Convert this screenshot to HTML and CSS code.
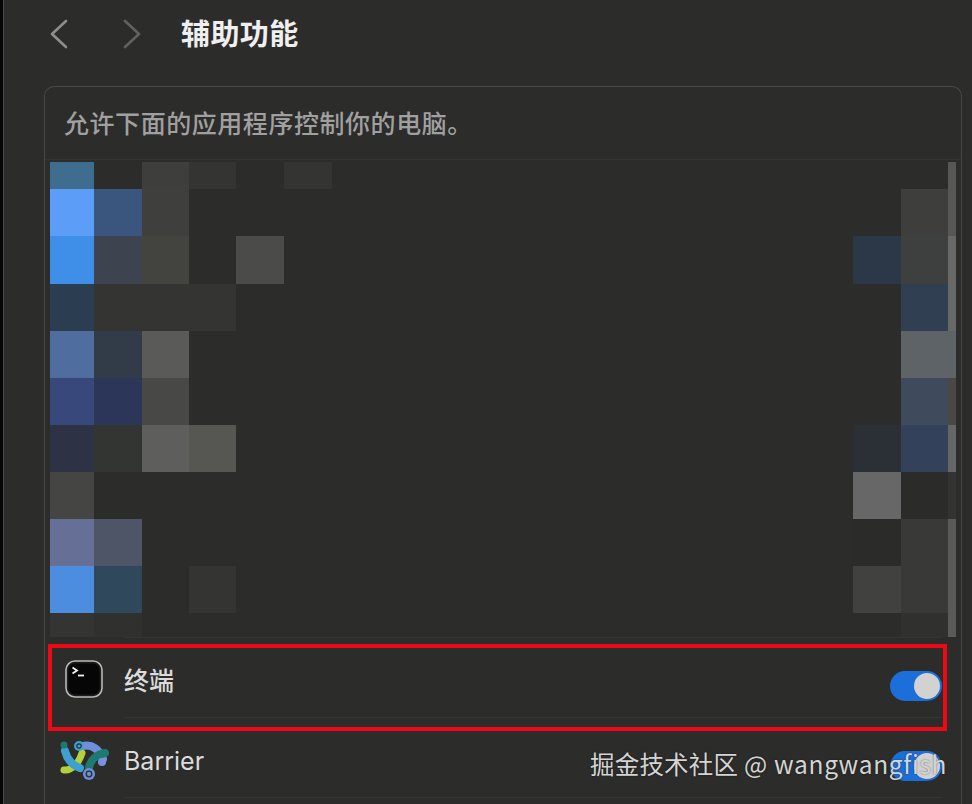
FILE: index.html
```html
<!DOCTYPE html>
<html lang="zh-CN">
<head>
    <meta charset="UTF-8">
    <meta name="viewport" content="width=device-width, initial-scale=1.0">
    <title>辅助功能</title>
    <link rel="stylesheet" href="styles.css">
</head>
<body>
    <div class="window">
        <div class="toolbar">
            <svg class="nav-icon" width="18" height="30" viewBox="0 0 18 30" fill="none" stroke="#8e8e8e" stroke-width="2.6" stroke-linecap="round" stroke-linejoin="round">
                <path d="M16 2 L2 15 L16 28"></path>
            </svg>
            <svg class="nav-icon nav-forward" width="18" height="30" viewBox="0 0 18 30" fill="none" stroke="#616161" stroke-width="2.6" stroke-linecap="round" stroke-linejoin="round">
                <path d="M2 2 L16 15 L2 28"></path>
            </svg>
            <h1 class="title">辅助功能</h1>
        </div>

        <div class="panel">
            <div class="panel-note">允许下面的应用程序控制你的电脑。</div>

            <!-- blurred out part of the app list -->
            <svg class="mosaic" width="906" height="475" viewBox="50 162 906 475">
                <rect x="50" y="162" width="44" height="27" fill="#3f6d8f"></rect>
                <rect x="142" y="162" width="47" height="27" fill="#3e3e3d"></rect>
                <rect x="189" y="162" width="47" height="27" fill="#343433"></rect>
                <rect x="284" y="162" width="48" height="27" fill="#343433"></rect>

                <rect x="50" y="189" width="44" height="47" fill="#5b9df7"></rect>
                <rect x="94" y="189" width="48" height="47" fill="#3a567f"></rect>
                <rect x="142" y="189" width="47" height="47" fill="#3f3f3e"></rect>
                <rect x="901" y="189" width="47" height="47" fill="#3e3e3d"></rect>

                <rect x="50" y="236" width="44" height="48" fill="#3f8fe8"></rect>
                <rect x="94" y="236" width="48" height="48" fill="#3e4350"></rect>
                <rect x="142" y="236" width="47" height="48" fill="#434340"></rect>
                <rect x="236" y="236" width="48" height="48" fill="#4b4b4a"></rect>
                <rect x="853" y="236" width="48" height="48" fill="#2c3747"></rect>
                <rect x="901" y="236" width="47" height="48" fill="#3e3f3f"></rect>

                <rect x="50" y="284" width="44" height="47" fill="#2b3d50"></rect>
                <rect x="94" y="284" width="142" height="47" fill="#343432"></rect>
                <rect x="901" y="284" width="47" height="47" fill="#303f51"></rect>

                <rect x="50" y="331" width="44" height="47" fill="#4f6d9e"></rect>
                <rect x="94" y="331" width="48" height="47" fill="#323b48"></rect>
                <rect x="142" y="331" width="47" height="47" fill="#5a5a58"></rect>
                <rect x="901" y="331" width="55" height="47" fill="#5d6367"></rect>

                <rect x="50" y="378" width="44" height="47" fill="#39487a"></rect>
                <rect x="94" y="378" width="48" height="47" fill="#2b3658"></rect>
                <rect x="142" y="378" width="47" height="47" fill="#484847"></rect>
                <rect x="901" y="378" width="47" height="47" fill="#3f4b5c"></rect>

                <rect x="50" y="425" width="44" height="47" fill="#2d3345"></rect>
                <rect x="94" y="425" width="48" height="47" fill="#333533"></rect>
                <rect x="142" y="425" width="47" height="47" fill="#5e5e5d"></rect>
                <rect x="189" y="425" width="47" height="47" fill="#565652"></rect>
                <rect x="853" y="425" width="48" height="47" fill="#2a3035"></rect>
                <rect x="901" y="425" width="47" height="47" fill="#33425a"></rect>

                <rect x="50" y="472" width="44" height="47" fill="#454543"></rect>
                <rect x="853" y="472" width="48" height="47" fill="#676767"></rect>
                <rect x="901" y="472" width="47" height="47" fill="#2b2b29"></rect>

                <rect x="50" y="519" width="44" height="47" fill="#666f96"></rect>
                <rect x="94" y="519" width="48" height="47" fill="#4e5566"></rect>
                <rect x="853" y="519" width="48" height="47" fill="#2b2b29"></rect>
                <rect x="901" y="519" width="47" height="47" fill="#393937"></rect>

                <rect x="50" y="566" width="44" height="47" fill="#4c8de0"></rect>
                <rect x="94" y="566" width="48" height="47" fill="#30485c"></rect>
                <rect x="189" y="566" width="47" height="47" fill="#343432"></rect>
                <rect x="853" y="566" width="48" height="47" fill="#41413f"></rect>
                <rect x="901" y="566" width="47" height="47" fill="#393937"></rect>

                <rect x="50" y="613" width="44" height="24" fill="#343432"></rect>
                <rect x="94" y="613" width="48" height="24" fill="#30302e"></rect>
                <rect x="901" y="613" width="47" height="24" fill="#30302e"></rect>

                <!-- scrollbar, pixelated along with the list -->
                <rect x="948" y="162" width="8" height="74" fill="#575755"></rect>
                <rect x="948" y="236" width="8" height="95" fill="#686866"></rect>
                <rect x="948" y="378" width="8" height="47" fill="#494845"></rect>
                <rect x="948" y="425" width="8" height="47" fill="#666664"></rect>
                <rect x="948" y="472" width="8" height="47" fill="#333331"></rect>
                <rect x="948" y="519" width="8" height="118" fill="#5a5a58"></rect>
            </svg>

            <div class="app-list">
                <div class="app-row app-row-marked">
                    <svg class="app-icon" width="38" height="38" viewBox="0 0 38 38" fill="none">
                        <rect x="1" y="1" width="36" height="36" rx="9" fill="#1c1c1c" stroke="#b8b8b8" stroke-width="1.6"></rect>
                        <rect x="3.5" y="3.5" width="31" height="31" rx="6.5" fill="#060606"></rect>
                        <path d="M7.5 7.5 L12 10.5 L7.5 13.5" stroke="#f2f2f2" stroke-width="1.8"></path>
                        <path d="M13 15.5 H19" stroke="#f2f2f2" stroke-width="1.8"></path>
                    </svg>
                    <div class="app-body app-body-first">
                        <span class="app-name app-name-cjk">终端</span>
                        <span class="toggle"><span class="toggle-knob"></span></span>
                    </div>
                </div>
                <div class="app-row">
                    <svg class="app-icon app-icon-wide" width="50" height="40" viewBox="0 0 50 40" fill="none" stroke-linecap="round">
                        <path d="M23 5 C32 3 40 9 43 18" stroke="#6f8fdc" stroke-width="8"></path>
                        <path d="M4 29 C12 30 19 22 22 12" stroke="#b3d13f" stroke-width="7"></path>
                        <path d="M5 10 C7 18 12 24 20 27" stroke="#3da0cf" stroke-width="8"></path>
                        <path d="M29 27 C30 19 37 13 45 12" stroke="#1d7a70" stroke-width="8"></path>
                        <circle cx="42" cy="21" r="4" fill="#7f8fe0"></circle>
                        <circle cx="4" cy="4" r="3.5" fill="#1d7a70"></circle>
                        <circle cx="19" cy="5" r="5" fill="#3da0cf"></circle>
                        <circle cx="19" cy="5" r="2.2" stroke="#23302f" stroke-width="1.2"></circle>
                        <circle cx="29" cy="33" r="6" fill="#6f8fdc"></circle>
                        <circle cx="29" cy="33" r="2.8" stroke="#2c2c2a" stroke-width="1.3"></circle>
                    </svg>
                    <div class="app-body">
                        <span class="app-name">Barrier</span>
                        <span class="toggle"><span class="toggle-knob"></span></span>
                    </div>
                </div>
            </div>
        </div>

        <div class="watermark">掘金技术社区 <span class="watermark-name">@ wangwangfish</span></div>
    </div>
</body>
</html>
```

FILE: styles.css
```css
:root {
    --background: #2c2c2a;
    --line: #484847;
    --line-soft: #343432;
    --text: #dcdcdc;
    --blue: #1c6fd8;
}

* {
    box-sizing: border-box;
    margin: 0;
    padding: 0;
}

html, body {
    height: 100%;
}

body {
    background: var(--background);
    overflow: hidden;
    font-family: "Noto Sans CJK SC", "Noto Sans", sans-serif;
}

.window {
    position: relative;
    height: 804px;
    overflow: hidden;
    border-left: 3px solid #050505;
    box-shadow: inset 1px 0 0 var(--line);
}

.toolbar {
    display: flex;
    align-items: center;
    height: 67px;
    margin-bottom: 19px;
    padding-left: 47px;
}

.nav-forward {
    margin-left: 55px;
}

.title {
    margin: 0 0 3px 40px;
    font-size: 29px;
    font-weight: 700;
    letter-spacing: 0.4px;
    line-height: 1;
    color: #efefef;
}

.panel {
    width: 918px;
    height: 720px;
    margin-left: 41px;
    border: 1px solid var(--line);
    border-bottom: none;
    border-radius: 10px 10px 0 0;
}

.panel-note {
    height: 73px;
    padding-left: 19px;
    border-bottom: 1px solid var(--line-soft);
    font-size: 25px;
    font-weight: 500;
    letter-spacing: 0.55px;
    line-height: 71px;
    color: #a0a0a0;
}

.mosaic {
    display: block;
    margin: 2px 0 0 5px;
}

.app-row {
    display: flex;
    padding: 0 19px 0 20px;
}

.app-icon {
    flex-shrink: 0;
    margin-top: 23px;
    margin-right: 21px;
}

.app-icon-wide {
    margin-left: -5px;
    margin-right: 14px;
}

.app-body {
    flex: 1;
    display: flex;
    justify-content: space-between;
    height: 80px;
    border-bottom: 1px solid var(--line-soft);
}

.app-body-first {
    height: 81px;
    border-top: 1px solid var(--line-soft);
}

.app-name {
    margin-top: 28px;
    font-family: "Inter", "Liberation Sans", sans-serif;
    font-size: 25px;
    line-height: 30px;
    color: var(--text);
}

.app-name-cjk {
    margin-top: 26px;
    font-family: "Noto Sans CJK SC", sans-serif;
    font-weight: 500;
}

.toggle {
    display: flex;
    justify-content: flex-end;
    align-items: center;
    width: 52px;
    height: 30px;
    margin-top: 33px;
    padding-right: 2px;
    border-radius: 15px;
    background: var(--blue);
}

.toggle-knob {
    width: 26px;
    height: 26px;
    border-radius: 50%;
    background: #d2d2d2;
}

/* red box drawn over the screenshot */
.app-row-marked {
    position: relative;
}

.app-row-marked::after {
    content: "";
    box-sizing: border-box;
    position: absolute;
    top: 7px;
    left: 3px;
    width: 899px;
    height: 87px;
    border: 4px solid #ee0a14;
}

.watermark {
    position: absolute;
    top: 746px;
    left: 587px;
    font-size: 24.5px;
    letter-spacing: 0.2px;
    line-height: 36px;
    white-space: nowrap;
    color: #d4d4d4;
    text-shadow: 0 0 2px rgba(0, 0, 0, 0.5);
}

.watermark-name {
    letter-spacing: 0.7px;
}
```
